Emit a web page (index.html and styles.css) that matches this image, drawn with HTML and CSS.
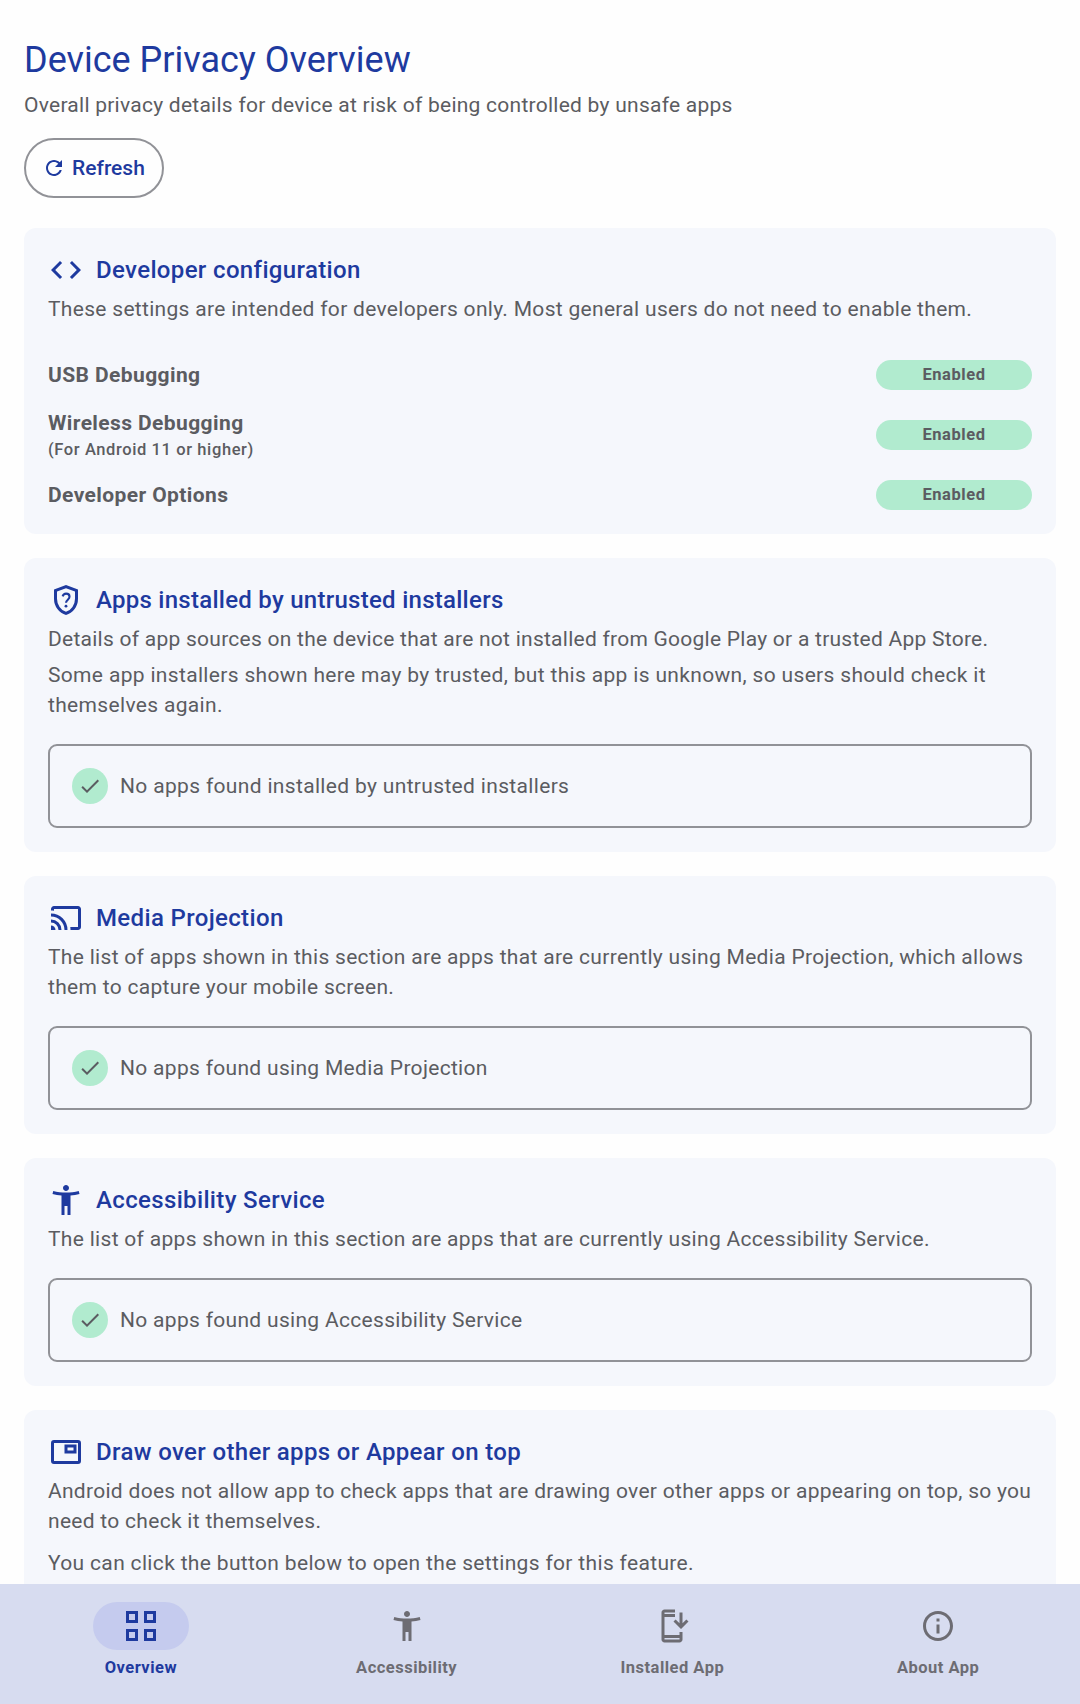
FILE: index.html
```html
<!DOCTYPE html>
<html lang="en">
<head>
<meta charset="utf-8">
<title>Device Privacy Overview</title>
<link rel="stylesheet" href="styles.css">
</head>
<body>
<svg class="sprite" aria-hidden="true">
  <symbol id="refresh" viewBox="0 0 24 24"><path d="M17.65 6.35C16.2 4.9 14.21 4 12 4c-4.42 0-7.99 3.58-7.99 8s3.57 8 7.99 8c3.73 0 6.84-2.55 7.73-6h-2.08c-.82 2.33-3.04 4-5.65 4-3.31 0-6-2.69-6-6s2.69-6 6-6c1.66 0 3.14.69 4.22 1.78L13 11h7V4l-2.35 2.35z"/></symbol>
  <symbol id="code" viewBox="0 0 24 24"><path d="M9.4 16.6 4.8 12l4.6-4.6L8 6l-6 6 6 6zm5.2 0 4.6-4.6-4.6-4.6L16 6l6 6-6 6z"/></symbol>
  <symbol id="shield" viewBox="0 0 24 24">
    <path d="M12 22q-3.475-.875-5.738-3.988T4 11.1V5l8-3 8 3v6.1q0 3.8-2.262 6.913T12 22zm0-2.1q2.6-.825 4.3-3.3t1.7-5.5V6.375l-6-2.25-6 2.25V11.1q0 3.025 1.7 5.5t4.3 3.3z"/>
    <path class="line" d="M9.75 9.6C10.1 8.4 11 7.75 12.05 7.75c1.35 0 2.3.85 2.3 2.1 0 1.8-2.35 2.1-2.35 4.05"/>
    <circle cx="12" cy="16.1" r=".95"/>
  </symbol>
  <symbol id="cast" viewBox="0 -960 960 960"><path d="M800-160H600q0-20-1.5-40t-4.5-40h206v-480H160v46q-20-3-40-4.500T80-680v-40q0-33 23.500-56.500T160-800h640q33 0 56.500 23.500T880-720v480q0 33-23.500 56.500T800-160Zm-720 0v-120q50 0 85 35t35 85H80Zm200 0q0-83-58.500-141.500T80-360v-80q117 0 198.500 81.500T360-160h-80Zm160 0q0-75-28.500-140.500t-77-114q-48.500-48.500-114-77T80-520v-80q91 0 171 34.500T391-471q60 60 94.500 140T520-160h-80Z"/></symbol>
  <symbol id="person" viewBox="0 0 24 24"><path d="M20.500 6c-2.610.700-5.670 1-8.500 1s-5.890-.300-8.500-1L3 8c1.860.500 4 .830 6 1v13h2v-6h2v6h2V9c2-.170 4.140-.500 6-1l-.500-2zM12 6c1.100 0 2-.900 2-2s-.900-2-2-2-2 .900-2 2 .900 2 2 2z"/></symbol>
  <symbol id="pip" viewBox="0 0 24 24"><path fill-rule="evenodd" d="M4 4h16a2 2 0 0 1 2 2v12a2 2 0 0 1-2 2H4a2 2 0 0 1-2-2V6a2 2 0 0 1 2-2zm0 2v12h16V6zM11 7h8v6h-8zm2 2v2h4V9z"/></symbol>
  <symbol id="check" viewBox="0 0 24 24"><path d="M9 16.170 4.830 12l-1.420 1.410L9 19 21 7l-1.410-1.410z"/></symbol>
  <symbol id="grid" viewBox="0 0 24 24"><path fill-rule="evenodd" d="M2 2h8v8H2zm2 2v4h4V4zM14 2h8v8h-8zm2 2v4h4V4zM2 14h8v8H2zm2 2v4h4v-4zM14 14h8v8h-8zm2 2v4h4v-4z"/></symbol>
  <symbol id="install" viewBox="0 0 24 24"><path fill-rule="evenodd" d="M17 18H7V6h7V1H7c-1.100 0-2 .900-2 2v18c0 1.100.900 2 2 2h10c1.100 0 2-.900 2-2v-5h-2v2zM7 3h7v1H7V3zm10 18H7v-1h10v1z"/><path d="M18 14l5-5-1.410-1.410L19 10.170V3h-2v7.170l-2.590-2.580L13 9l5 5z"/></symbol>
  <symbol id="info" viewBox="0 0 24 24"><path d="M11 7h2v2h-2zm0 4h2v6h-2zm1-9C6.480 2 2 6.480 2 12s4.480 10 10 10 10-4.480 10-10S17.520 2 12 2zm0 18c-4.410 0-8-3.590-8-8s3.590-8 8-8 8 3.590 8 8-3.590 8-8 8z"/></symbol>
</svg>

<main class="content">
  <header class="intro">
    <h1 class="page-title">Device Privacy Overview</h1>
    <p class="text tight">Overall privacy details for device at risk of being controlled by unsafe apps</p>
    <button class="refresh"><svg class="refresh-icon"><use href="#refresh"/></svg><span>Refresh</span></button>
  </header>

  <section class="card">
    <h2 class="card-title"><svg class="icon"><use href="#code"/></svg><span>Developer configuration</span></h2>
    <p class="text">These settings are intended for developers only. Most general users do not need to enable them.</p>
    <div class="settings">
      <div class="setting"><div class="name">USB Debugging</div><span class="badge">Enabled</span></div>
      <div class="setting"><div><div class="name">Wireless Debugging</div><div class="hint">(For Android 11 or higher)</div></div><span class="badge">Enabled</span></div>
      <div class="setting"><div class="name">Developer Options</div><span class="badge">Enabled</span></div>
    </div>
  </section>

  <section class="card">
    <h2 class="card-title tight"><svg class="icon"><use href="#shield"/></svg><span>Apps installed by untrusted installers</span></h2>
    <p class="text tight">Details of app sources on the device that are not installed from Google Play or a trusted App Store.</p>
    <p class="text loose">Some app installers shown here may by trusted, but this app is unknown, so users should check it<br>themselves again.</p>
    <div class="result"><span class="tick"><svg class="tick-icon"><use href="#check"/></svg></span><span class="text loose">No apps found installed by untrusted installers</span></div>
  </section>

  <section class="card">
    <h2 class="card-title"><svg class="icon"><use href="#cast"/></svg><span>Media Projection</span></h2>
    <p class="text">The list of apps shown in this section are apps that are currently using Media Projection, which allows<br>them to capture your mobile screen.</p>
    <div class="result"><span class="tick"><svg class="tick-icon"><use href="#check"/></svg></span><span class="text">No apps found using Media Projection</span></div>
  </section>

  <section class="card">
    <h2 class="card-title"><svg class="icon"><use href="#person"/></svg><span>Accessibility Service</span></h2>
    <p class="text">The list of apps shown in this section are apps that are currently using Accessibility Service.</p>
    <div class="result"><span class="tick"><svg class="tick-icon"><use href="#check"/></svg></span><span class="text">No apps found using Accessibility Service</span></div>
  </section>

  <section class="card">
    <h2 class="card-title"><svg class="icon"><use href="#pip"/></svg><span>Draw over other apps or Appear on top</span></h2>
    <p class="text snug">Android does not allow app to check apps that are drawing over other apps or appearing on top, so you<br>need to check it themselves.</p>
    <p class="text loose note">You can click the button below to open the settings for this feature.</p>
  </section>
</main>

<nav class="tabs">
  <a class="tab active"><span class="pill"><svg class="icon"><use href="#grid"/></svg></span><span>Overview</span></a>
  <a class="tab"><span class="pill"><svg class="icon"><use href="#person"/></svg></span><span>Accessibility</span></a>
  <a class="tab"><span class="pill"><svg class="icon"><use href="#install"/></svg></span><span>Installed App</span></a>
  <a class="tab"><span class="pill"><svg class="icon"><use href="#info"/></svg></span><span>About App</span></a>
</nav>
</body>
</html>
```
FILE: styles.css
```css
:root {
  --primary: #1e3a9f;
  --text: #5b5c61;
  --outline: #919297;
  --card: #f5f7fc;
  --green: #b1ebcf;
}

* { box-sizing: border-box; margin: 0; }

body {
  display: flex;
  flex-direction: column;
  height: 1704px;
  overflow: hidden;
  background: #fefefe;
  color: var(--text);
  font-family: Roboto, sans-serif;
}

svg { fill: currentColor; flex: none; }
.sprite { display: none; }
.line { fill: none; stroke: currentColor; stroke-width: 1.4; }
.icon { display: block; width: 36px; height: 36px; }

.content {
  flex: 1;
  min-height: 0;
  overflow: hidden;
  padding: 36px 24px 0;
  display: flex;
  flex-direction: column;
  gap: 24px;
}
.content > * { flex: none; }

.intro {
  display: flex;
  flex-direction: column;
  align-items: flex-start;
  padding-bottom: 6px;
}
.page-title {
  margin-bottom: 6px;
  color: var(--primary);
  font-size: 36px;
  font-weight: 400;
  line-height: 48px;
}
.text {
  font-size: 21px;
  line-height: 30px;
  letter-spacing: 0.305px;
  white-space: nowrap;
}
.text.tight { letter-spacing: 0.254px; }
.text.snug { letter-spacing: 0.289px; }
.text.loose { letter-spacing: 0.334px; }
.refresh {
  display: flex;
  align-items: center;
  gap: 6px;
  width: 140px;
  height: 60px;
  margin-top: 18px;
  padding: 0 16px;
  border: 2px solid var(--outline);
  border-radius: 30px;
  background: none;
  color: var(--primary);
  font: 500 21px/30px Roboto, sans-serif;
}
.refresh-icon, .tick-icon { width: 24px; height: 24px; }

.card {
  display: flex;
  flex-direction: column;
  gap: 6px;
  padding: 24px;
  border-radius: 12px;
  background: var(--card);
}
.card-title {
  display: flex;
  gap: 12px;
  color: var(--primary);
  font-size: 24px;
  font-weight: 500;
  line-height: 36px;
  letter-spacing: 0.35px;
  white-space: nowrap;
}
.card-title.tight { letter-spacing: 0.268px; }
.note { margin-top: 6px; }

.settings {
  display: flex;
  flex-direction: column;
  gap: 18px;
  margin-top: 30px;
}
.setting {
  display: flex;
  align-items: center;
  justify-content: space-between;
}
.name {
  font-size: 21px;
  font-weight: 700;
  line-height: 30px;
  letter-spacing: 0.4px;
}
.hint {
  font-size: 16.5px;
  font-weight: 500;
  line-height: 24px;
  letter-spacing: 0.6px;
}
.badge {
  width: 156px;
  height: 30px;
  border-radius: 15px;
  background: var(--green);
  font-size: 16.5px;
  font-weight: 700;
  line-height: 29px;
  letter-spacing: 0.55px;
  text-align: center;
}

.result {
  display: flex;
  align-items: center;
  gap: 12px;
  height: 84px;
  margin-top: 18px;
  padding: 0 22px;
  border: 2px solid var(--outline);
  border-radius: 9px;
}
.tick {
  display: grid;
  place-items: center;
  width: 36px;
  height: 36px;
  border-radius: 50%;
  background: var(--green);
}

.tabs {
  display: grid;
  grid-template-columns: repeat(4, 1fr);
  flex: none;
  height: 120px;
  padding: 18px 9px 0 8px;
  background: #d7dcf0;
}
.tab {
  display: flex;
  flex-direction: column;
  align-items: center;
  gap: 6px;
  color: #6d6c73;
  font-size: 16.5px;
  font-weight: 700;
  line-height: 24px;
  letter-spacing: 0.48px;
}
.pill {
  display: grid;
  place-items: center;
  width: 96px;
  height: 48px;
  border-radius: 24px;
}
.active { color: var(--primary); }
.active .pill { background: #c5cbee; }
```
